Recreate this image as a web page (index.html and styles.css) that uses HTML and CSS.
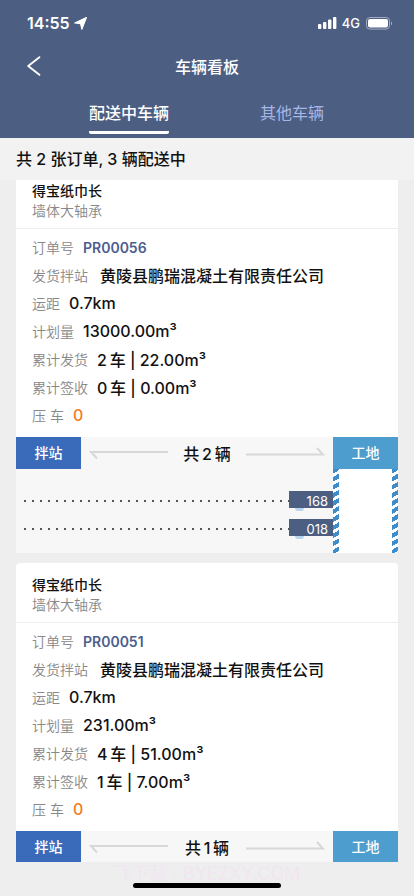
FILE: index.html
```html
<!DOCTYPE html>
<html lang="zh-CN">
<head>
<meta charset="utf-8">
<meta name="viewport" content="width=device-width, initial-scale=1">
<title>车辆看板</title>
<link rel="stylesheet" href="styles.css">
</head>
<body>
<div class="app">
  <header class="top">
    <div class="status">
      <span class="time">14:55</span>
      <svg class="locate" width="13" height="13" viewBox="0 0 13 13" aria-hidden="true"><path d="M12.4.6 7.8 12.2 6.6 6.6.8 6z" fill="#fff" stroke="#fff" stroke-width="1.2" stroke-linejoin="round"/></svg>
      <svg class="signal" width="19" height="12" viewBox="0 0 19 12" fill="#fff" aria-hidden="true"><rect x="0" y="7" width="3.4" height="5" rx="1"/><rect x="5" y="5" width="3.4" height="7" rx="1"/><rect x="10" y="2.6" width="3.4" height="9.4" rx="1"/><rect x="15" y="0" width="3.4" height="12" rx="1"/></svg>
      <span class="network">4G</span>
      <svg width="27" height="13" viewBox="0 0 27 13" aria-hidden="true"><rect x=".5" y=".5" width="23" height="11.6" rx="3.4" fill="none" stroke="#a3adc2"/><rect x="2" y="2" width="20" height="8.6" rx="2" fill="#fff"/><path d="M25 4.4c1.5.6 1.5 3.2 0 3.8z" fill="#a3adc2"/></svg>
    </div>
    <div class="nav">
      <button class="back" type="button" aria-label="返回"><svg width="14" height="20" viewBox="0 0 14 20" fill="none" stroke="#fff" stroke-width="1.9" stroke-linecap="round" stroke-linejoin="round"><path d="M12.4 1.2 1.2 10l11.2 8.8"/></svg></button>
      <h1>车辆看板</h1>
    </div>
    <nav class="tabs">
      <a class="tab active" href="#delivering">配送中车辆</a>
      <a class="tab" href="#others">其他车辆</a>
    </nav>
  </header>
  <p class="summary">共 2 张订单, 3 辆配送中</p>
  <main class="list" id="delivering">
    <article class="card">
      <div class="card-head"><h2>得宝纸巾长</h2><p>墙体大轴承</p></div>
      <dl class="info">
        <div><dt>订单号</dt><dd class="order">PR00056</dd></div>
        <div><dt>发货拌站</dt><dd class="station">黄陵县鹏瑞混凝土有限责任公司</dd></div>
        <div><dt>运距</dt><dd>0.7km</dd></div>
        <div><dt>计划量</dt><dd>13000.00m³</dd></div>
        <div><dt>累计发货</dt><dd>2&thinsp;车 | 22.00m³</dd></div>
        <div><dt>累计签收</dt><dd>0&thinsp;车 | 0.00m³</dd></div>
        <div><dt>压 车</dt><dd class="held">0</dd></div>
      </dl>
      <div class="route">
        <span class="end plant">拌站</span>
        <svg class="arrow" width="80" height="14" viewBox="0 0 80 14" aria-hidden="true"><path d="M79 6H2l6 6.5"/></svg>
        <strong>共&thinsp;2&thinsp;辆</strong>
        <svg class="arrow" width="80" height="14" viewBox="0 0 80 14" aria-hidden="true"><path d="M1 8.500h77L72 2"/></svg>
        <span class="end site">工地</span>
      </div>
      <div class="road">
        <div class="lanes">
          <div class="lane"><span class="dots"></span><span class="truck">168</span></div>
          <div class="lane"><span class="dots"></span><span class="truck">018</span></div>
        </div>
        <div class="yard"></div>
      </div>
    </article>
    <article class="card open">
      <div class="card-head"><h2>得宝纸巾长</h2><p>墙体大轴承</p></div>
      <dl class="info">
        <div><dt>订单号</dt><dd class="order">PR00051</dd></div>
        <div><dt>发货拌站</dt><dd class="station">黄陵县鹏瑞混凝土有限责任公司</dd></div>
        <div><dt>运距</dt><dd>0.7km</dd></div>
        <div><dt>计划量</dt><dd>231.00m³</dd></div>
        <div><dt>累计发货</dt><dd>4&thinsp;车 | 51.00m³</dd></div>
        <div><dt>累计签收</dt><dd>1&thinsp;车 | 7.00m³</dd></div>
        <div><dt>压 车</dt><dd class="held">0</dd></div>
      </dl>
      <div class="route">
        <span class="end plant">拌站</span>
        <svg class="arrow" width="80" height="14" viewBox="0 0 80 14" aria-hidden="true"><path d="M79 6H2l6 6.5"/></svg>
        <strong>共&thinsp;1&thinsp;辆</strong>
        <svg class="arrow" width="80" height="14" viewBox="0 0 80 14" aria-hidden="true"><path d="M1 8.500h77L72 2"/></svg>
        <span class="end site">工地</span>
      </div>
    </article>
  </main>
  <footer class="home">
    <span class="mark">飞下载 · BYEZXY.COM</span>
    <span class="bar"></span>
  </footer>
</div>
</body>
</html>
```
FILE: styles.css
```css
* { box-sizing: border-box; }
body, h1, h2, p, dl, dd { margin: 0; }
body {
  background: #eee;
  color: #111;
  font-family: Inter, "Noto Sans CJK SC", sans-serif;
  font-size: 16px;
  font-weight: 500;
}
h1, h2 { font-size: 16px; font-weight: 500; }
.app { display: flex; flex-direction: column; height: 100vh; overflow: hidden; }
.top { position: relative; z-index: 1; background: #4c5e82; color: #fff; }
.status { display: flex; align-items: center; height: 44px; padding: 2px 21px 0 27px; }
.time { font-size: 16px; font-weight: 600; }
.locate { margin-left: 4px; }
.signal { margin-left: auto; }
.network { margin: 0 6px 0 5px; font-size: 13px; }
.nav { display: grid; grid-template-columns: 48px 1fr 48px; align-items: center; height: 44px; }
.nav h1 { text-align: center; }
.back { display: flex; justify-content: flex-end; padding: 0 7px 0 0; border: 0; background: none; }
.tabs { display: flex; gap: 91px; height: 50px; padding: 6px 16px 4px 89px; }
.tab { height: 40px; line-height: 38px; color: #a6b7e6; font-weight: 400; text-decoration: none; }
.tab.active { color: #fff; font-weight: 500; border-bottom: 3px solid #fff; border-radius: 2px; }
.summary { position: relative; z-index: 1; background: #f2f2f2; padding: 0 16px; height: 42px; line-height: 42px; }
.list { flex: 1; min-height: 0; overflow: hidden; margin-top: -11px; padding: 0 16px; }
.card { margin-bottom: 10px; border-radius: 4px; overflow: hidden; background: #fff; }
.card.open { border-radius: 4px 4px 0 0; }
.card-head { height: 60px; padding: 12px 16px 0; border-bottom: 1px solid #eee; line-height: 20px; font-size: 14px; }
.card-head h2 { font-size: 14px; line-height: 20px; }
.card-head p { color: #888; font-weight: 350; }
.info { padding: 4px 16px 8px; }
.info div { display: flex; align-items: center; gap: 9px; height: 28px; }
.info dt { font-size: 14px; font-weight: 350; color: #888; }
.info dd { white-space: nowrap; }
.info .order { font-size: 14px; font-weight: 600; color: #4c5e8f; }
.info .station { padding-left: 3px; }
.info .held { color: #f27a22; }
.route { display: flex; align-items: center; height: 32px; background: #f7f7f7; }
.route strong { flex: 1; text-align: center; font-weight: 500; white-space: nowrap; }
.end { width: 65px; line-height: 32px; text-align: center; color: #fff; font-size: 14px; }
.plant { background: #3a6bba; }
.site { background: #4d9dcf; }
.arrow { margin: 0 8px; fill: none; stroke: #d8d8d8; stroke-width: 2; }
.road { display: flex; height: 84px; background: #f7f7f7; }
.lanes { flex: 1; padding: 18px 0 10px 5px; }
.lane { display: flex; align-items: center; height: 28px; }
.dots { flex: 1; height: 2px; background: radial-gradient(circle, #555 1px, transparent 1px) 0 0 / 8px 2px; }
.truck { position: relative; width: 44px; height: 17px; padding-right: 5px; background: #4c5e82; color: #fff; font-size: 13px; font-weight: 400; line-height: 20px; text-align: right; margin-bottom: 4px; }
.truck::after { content: ""; position: absolute; left: 6px; top: 17px; width: 9px; height: 3px; border-radius: 0 0 5px 5px; background: #b5d4ee; }
.yard { width: 65px; background: #fff; display: flex; justify-content: space-between; }
.yard::before, .yard::after { content: ""; width: 6px; background: repeating-linear-gradient(150deg, #3e8dca 0 4px, #fff 4px 7px); }
.home { position: relative; height: 34px; text-align: center; }
.mark { font-size: 18px; font-weight: 400; line-height: 24px; color: #f1e6f1; }
.bar { position: absolute; left: 50%; bottom: 8px; width: 148px; height: 5px; margin-left: -74px; border-radius: 3px; background: #000; }
```
